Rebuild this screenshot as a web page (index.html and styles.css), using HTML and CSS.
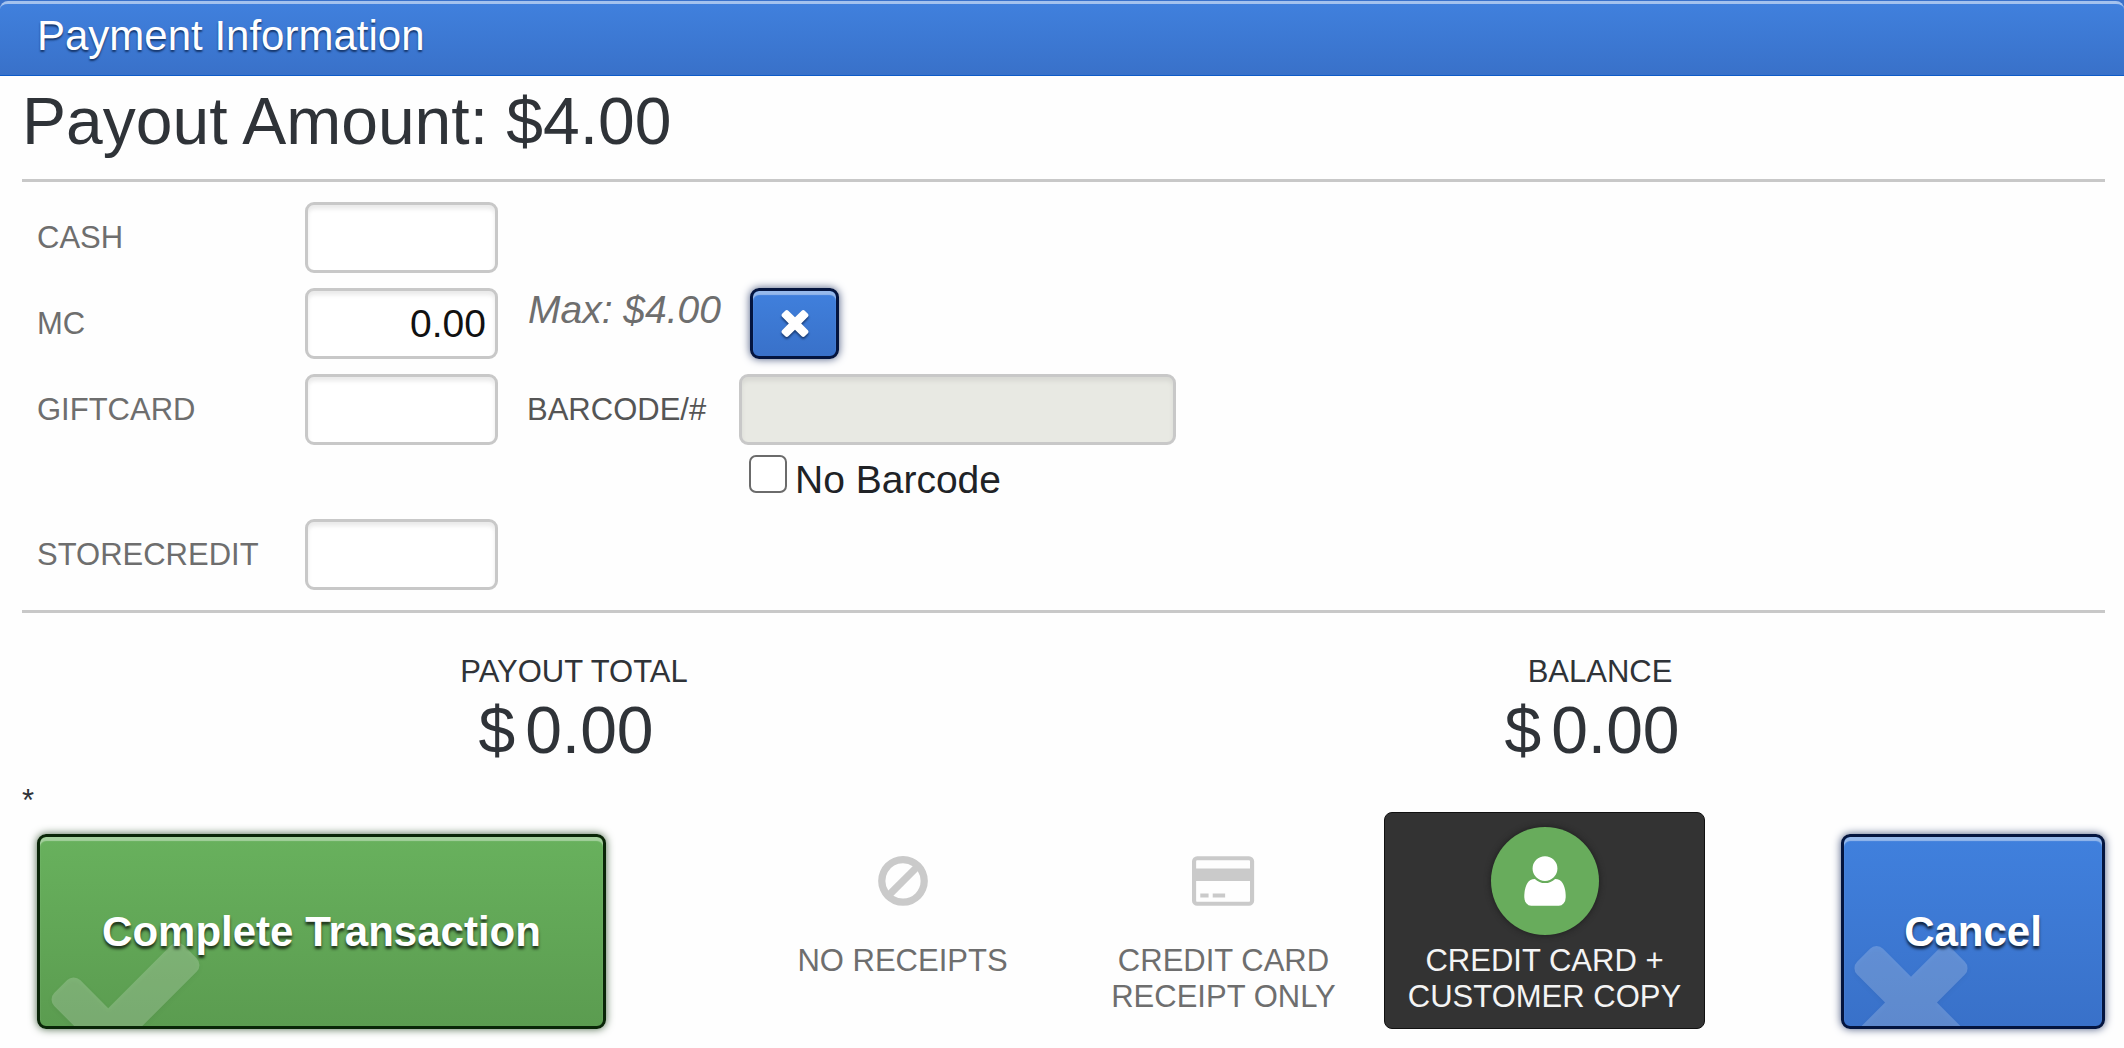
FILE: index.html
```html
<!DOCTYPE html>
<html lang="en">
<head>
  <meta charset="utf-8">
  <title>Payment Information</title>
  <link rel="stylesheet" href="styles.css">
</head>
<body>
  <header class="titlebar"><h1>Payment Information</h1></header>
  <form class="payment">
    <h2 class="payout">Payout Amount: $4.00</h2>
    <hr class="rule">
    <div class="methods">
      <div class="method">
        <label class="method-label" for="cash">CASH</label>
        <input class="field" id="cash" type="text">
      </div>
      <div class="method">
        <label class="method-label" for="mc">MC</label>
        <input class="field" id="mc" type="text" value="0.00">
        <span class="max">Max: $4.00</span>
        <button class="btn btn-blue btn-clear" type="button" aria-label="Clear">
          <svg class="clear-icon" viewBox="192 64 1408 1792" aria-hidden="true"><path d="M1490 1322q0 40-28 68l-136 136q-28 28-68 28t-68-28l-294-294-294 294q-28 28-68 28t-68-28l-136-136q-28-28-28-68t28-68l294-294-294-294q-28-28-28-68t28-68l136-136q28-28 68-28t68 28l294 294 294-294q28-28 68-28t68 28l136 136q28 28 28 68t-28 68l-294 294 294 294q28 28 28 68z"/></svg>
        </button>
      </div>
      <div class="method">
        <label class="method-label" for="giftcard">GIFTCARD</label>
        <input class="field" id="giftcard" type="text">
        <label class="method-label barcode-label" for="barcode">BARCODE/#</label>
        <div class="barcode">
          <input class="field field-wide" id="barcode" type="text" disabled>
          <label class="no-barcode"><input class="tick" type="checkbox">No Barcode</label>
        </div>
      </div>
      <div class="method">
        <label class="method-label" for="storecredit">STORECREDIT</label>
        <input class="field" id="storecredit" type="text">
      </div>
    </div>
    <hr class="rule">
    <div class="totals">
      <div class="total">
        <div class="total-label">PAYOUT TOTAL</div>
        <div class="total-value"><span>$</span><span>0.00</span></div>
      </div>
      <div class="total">
        <div class="total-label">BALANCE</div>
        <div class="total-value"><span>$</span><span>0.00</span></div>
      </div>
    </div>
    <div class="note">*</div>
    <div class="actions">
      <button class="btn btn-green btn-large" type="submit">
        <svg class="mark mark-check" viewBox="0 0 1792 1792" aria-hidden="true"><path d="M1671 566q0 40-28 68l-724 724-136 136q-28 28-68 28t-68-28l-136-136-362-362q-28-28-28-68t28-68l136-136q28-28 68-28t68 28l294 295 656-657q28-28 68-28t68 28l136 136q28 28 28 68z"/></svg>
        <span class="btn-text">Complete Transaction</span>
      </button>
      <div class="receipts" role="radiogroup" aria-label="Receipts">
        <label class="receipt">
          <input class="receipt-radio" type="radio" name="receipt">
          <span class="disc"><svg class="icon" viewBox="0 0 1792 1792" aria-hidden="true"><path d="M1440 893q0-161-87-295l-754 753q137 89 297 89 111 0 211.500-43.500t173.500-116.500 116-174.500 43-212.500zm-999 299l755-754q-135-91-300-91-148 0-273 73t-198 199-73 274q0 162 89 299zm1223-299q0 157-61 300t-163.500 246-245 164-298.500 61-298.500-61-245-164-163.500-246-61-300 61-299.500 163.500-245.500 245-164 298.500-61 298.500 61 245 164 163.500 245.500 61 299.500z"/></svg></span>
          <span class="receipt-text">NO RECEIPTS</span>
        </label>
        <label class="receipt">
          <input class="receipt-radio" type="radio" name="receipt">
          <span class="disc"><svg class="icon" viewBox="0 0 1920 1792" aria-hidden="true"><path d="M1760 128q66 0 113 47t47 113v1216q0 66-47 113t-113 47h-1600q-66 0-113-47t-47-113v-1216q0-66 47-113t113-47h1600zm-1600 128q-13 0-22.500 9.500t-9.500 22.500v224h1664v-224q0-13-9.500-22.500t-22.500-9.500h-1600zm1600 1280q13 0 22.500-9.500t9.500-22.500v-608h-1664v608q0 13 9.500 22.500t22.500 9.500h1600zm-1504-128v-128h256v128h-256zm384 0v-128h384v128h-384z"/></svg></span>
          <span class="receipt-text">CREDIT CARD<br>RECEIPT ONLY</span>
        </label>
        <label class="receipt receipt-active">
          <input class="receipt-radio" type="radio" name="receipt" checked>
          <span class="disc"><svg class="icon" viewBox="0 0 1792 1792" aria-hidden="true"><path d="M1536 1399q0 109-62.500 187t-150.500 78h-854q-88 0-150.500-78t-62.500-187q0-85 8.500-160.500t31.500-152 58.500-131 94-89 134.500-34.500q131 128 313 128t313-128q76 0 134.500 34.500t94 89 58.500 131 31.500 152 8.500 160.500zm-256-887q0 159-112.500 271.500t-271.500 112.500-271.500-112.500-112.500-271.500 112.500-271.500 271.500-112.500 271.500 112.500 112.500 271.500z"/></svg></span>
          <span class="receipt-text">CREDIT CARD +<br>CUSTOMER COPY</span>
        </label>
      </div>
      <button class="btn btn-blue btn-large" type="button">
        <svg class="mark mark-cross" viewBox="192 0 1408 1792" aria-hidden="true"><path d="M1490 1322q0 40-28 68l-136 136q-28 28-68 28t-68-28l-294-294-294 294q-28 28-68 28t-68-28l-136-136q-28-28-28-68t28-68l294-294-294-294q-28-28-28-68t28-68l136-136q28-28 68-28t68 28l294 294 294-294q28-28 68-28t68 28l136 136q28 28 28 68t-28 68l-294 294 294 294q28 28 28 68z"/></svg>
        <span class="btn-text">Cancel</span>
      </button>
    </div>
  </form>
</body>
</html>
```
FILE: styles.css
```css
* {
  box-sizing: border-box;
}

body {
  margin: 0;
  background: #fefefe;
  color: #2f3338;
  font-family: "Liberation Sans", Arial, sans-serif;
  font-size: 31px;
  line-height: 36px;
}

h1,
h2 {
  margin: 0;
  font-weight: normal;
}

/* Title bar */
.titlebar {
  padding-top: 1px;
  background: #3971cb;
}

.titlebar h1 {
  padding: 0 37px 7px;
  border-top: 3px solid #a3c2ee;
  border-bottom: 1px solid #0d5bc8;
  border-radius: 8px 8px 0 0;
  background: linear-gradient(#4080dd, #3971c9);
  color: #fff;
  font-size: 42px;
  line-height: 64px;
  text-shadow: 0 2px 2px #143468;
}

/* Form body */
.payment {
  padding: 5px 19px 20px 22px;
}

.payout {
  font-size: 66px;
  line-height: 80px;
}

.rule {
  height: 3px;
  margin: 18px 0 20px;
  border: 0;
  background: #c8c8c8;
}

.methods {
  display: flex;
  flex-direction: column;
  gap: 15px;
  margin-bottom: 20px;
  padding-left: 15px;
}

.method {
  display: flex;
  align-items: flex-start;
}

.method-label {
  width: 268px;
  color: #6e6e6e;
  line-height: 71px;
}

.field {
  width: 193px;
  height: 71px;
  padding: 0 9px;
  border: 3px solid #c8c8c8;
  border-radius: 9px;
  background: #fff;
  box-shadow: inset 0 4px 4px #eaeaea;
  color: #111;
  font: 39px "Liberation Sans", Arial, sans-serif;
  text-align: right;
}

.field-wide {
  width: 437px;
}

.field:disabled {
  background: #e8e9e3;
  box-shadow: inset 0 4px 4px #d8d9d4;
}

.max {
  width: 252px;
  padding-left: 30px;
  color: #6e6e6e;
  font-size: 39px;
  font-style: italic;
  line-height: 44px;
}

.barcode-label {
  width: 241px;
  padding-left: 29px;
  color: #555;
}

.barcode {
  display: flex;
  flex-direction: column;
  gap: 10px;
}

.no-barcode {
  display: flex;
  align-items: baseline;
  gap: 8px;
  padding-left: 10px;
  color: #202226;
  font-size: 39px;
  line-height: 48px;
}

.tick {
  width: 38px;
  height: 38px;
  margin: 0;
  border: 2px solid #6b6b6b;
  border-radius: 7px;
  background: #fff;
  appearance: none;
}

.tick:checked {
  background: #3f7edb;
}

/* Totals */
.totals {
  display: grid;
  grid-template-columns: 1fr 1fr;
  margin-top: 41px;
  padding-left: 31px;
  text-align: center;
}

.total-label {
  padding-left: 16px;
}

.total-value {
  display: flex;
  justify-content: center;
  gap: 10px;
  font-size: 66px;
  line-height: 80px;
}

.note {
  margin-top: 20px;
  line-height: 22px;
}

/* Buttons */
.btn {
  position: relative;
  overflow: hidden;
  padding: 0;
  border: 3px solid;
  border-radius: 9px;
  color: #fff;
}

.btn-blue {
  border-color: #04153f;
  background: linear-gradient(#4080dd, #3971c9);
  box-shadow: inset 0 4px 1px #96b9eb, 0 0 8px #4a5a80;
}

.btn-green {
  border-color: #0a2608;
  background: linear-gradient(#68b15d, #5b9c50);
  box-shadow: inset 0 4px 1px #a5d19e, 0 0 8px #4a6647;
}

.btn-clear {
  display: flex;
  align-items: center;
  justify-content: center;
  width: 89px;
  height: 71px;
}

.clear-icon {
  width: 32px;
  height: 41px;
  fill: currentColor;
  filter: drop-shadow(0 2px 1px #16386f);
}

.btn-large {
  height: 195px;
}

.btn-text {
  position: relative;
  font: bold 42px "Liberation Sans", Arial, sans-serif;
  text-shadow: 0 3px 3px rgba(0, 0, 0, 0.7);
}

/* Watermark icon behind the button text, cut off by its bottom edge */
.mark {
  position: absolute;
  left: 0;
  bottom: -56px;
  height: 171px;
  fill: rgba(255, 255, 255, 0.2);
  filter: drop-shadow(0 2px 2px rgba(0, 0, 0, 0.2));
}

.mark-check {
  width: 171px;
}

.mark-cross {
  width: 134px;
}

/* Footer actions */
.actions {
  display: grid;
  grid-template-columns: 569fr 963fr 264fr;
  align-items: end;
  column-gap: 136px;
  padding-left: 15px;
}

.receipts {
  display: grid;
  grid-template-columns: repeat(3, 1fr);
}

.receipt {
  position: relative;
  display: flex;
  flex-direction: column;
  align-items: center;
  gap: 8px;
  padding: 14px 0 13px;
  border: 1px solid transparent;
  border-radius: 8px;
  color: #6e6e6e;
  text-align: center;
}

.receipt-radio {
  position: absolute;
  opacity: 0;
}

.disc {
  display: flex;
  align-items: center;
  justify-content: center;
  width: 108px;
  height: 108px;
  border-radius: 50%;
}

.icon {
  height: 58px;
  fill: #cacaca;
}

.receipt-active {
  border-color: #111;
  background: #333;
  color: #f4f4f4;
}

.receipt-active .disc {
  background: #68ac5c;
  box-shadow: 0 0 6px #1c1c1c;
}

.receipt-active .icon {
  fill: #fff;
}
```
